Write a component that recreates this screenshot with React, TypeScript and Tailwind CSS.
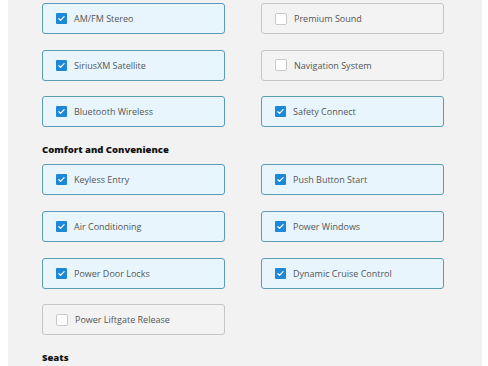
type Option = { label: string; checked: boolean };

const SECTIONS: { title?: string; items: Option[] }[] = [
  {
    items: [
      { label: "AM/FM Stereo", checked: true },
      { label: "Premium Sound", checked: false },
      { label: "SiriusXM Satellite", checked: true },
      { label: "Navigation System", checked: false },
      { label: "Bluetooth Wireless", checked: true },
      { label: "Safety Connect", checked: true },
    ],
  },
  {
    title: "Comfort and Convenience",
    items: [
      { label: "Keyless Entry", checked: true },
      { label: "Push Button Start", checked: true },
      { label: "Air Conditioning", checked: true },
      { label: "Power Windows", checked: true },
      { label: "Power Door Locks", checked: true },
      { label: "Dynamic Cruise Control", checked: true },
      { label: "Power Liftgate Release", checked: false },
    ],
  },
  { title: "Seats", items: [] },
];

function Checkbox({ checked }: { checked: boolean }) {
  if (!checked) {
    return (
      <span className="h-[12px] w-[12px] shrink-0 rounded-[2px] border border-[#c9c9c9] bg-white" />
    );
  }
  return (
    <span className="flex h-[11px] w-[11px] shrink-0 items-center justify-center rounded-[1px] bg-[#1d87d8]">
      <svg viewBox="0 0 12 12" className="h-[9px] w-[9px]" fill="none">
        <path d="M2.5 6.3l2.2 2.2 4.8-5" stroke="#fff" strokeWidth="1.6" strokeLinecap="round" strokeLinejoin="round" />
      </svg>
    </span>
  );
}

function OptionCard({ label, checked }: Option) {
  return (
    <label
      className={
        checked
          ? "flex h-[31px] items-center gap-[7px] rounded-[3px] border border-[#5a9cb6] bg-[#e8f5fc] pl-[13px]"
          : "flex h-[31px] items-center gap-[7px] rounded-[3px] border border-[#c6c6c6] bg-[#f3f3f3] pl-[13px]"
      }
    >
      <Checkbox checked={checked} />
      <span className="text-[9px] leading-none text-[#555]">{label}</span>
    </label>
  );
}

export default function App() {
  return (
    <div className="h-[366px] w-[488px] overflow-hidden bg-white pl-[8px] pr-[6px] font-['Open_Sans',sans-serif]">
      <div className="h-full bg-[#f2f2f2] pl-[34px] pt-[3px]">
        {SECTIONS.map((section, i) => (
          <section key={i}>
            {section.title && (
              <h3 className="mb-[7px] mt-[16px] text-[9.5px] font-extrabold leading-[14px] text-[#111]">
                {section.title}
              </h3>
            )}
            {section.items.length > 0 && (
              <div className="grid w-[402px] grid-cols-[183px_183px] gap-x-[36px] gap-y-[15.7px]">
                {section.items.map((item) => (
                  <OptionCard key={item.label} {...item} />
                ))}
              </div>
            )}
          </section>
        ))}
      </div>
    </div>
  );
}
